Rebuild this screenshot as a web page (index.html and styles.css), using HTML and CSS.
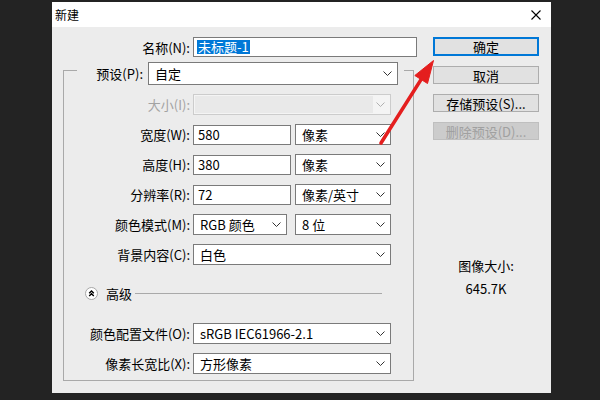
FILE: index.html
```html
<!DOCTYPE html>
<html lang="zh-CN">
<head>
<meta charset="utf-8">
<title>新建</title>
<link rel="stylesheet" href="styles.css">
</head>
<body>
<div class="dialog">
  <div class="titlebar">
    <span class="title">新建</span>
    <svg class="close" width="10" height="10" viewBox="0 0 10 10"><path d="M0.5 0.5 L9.5 9.5 M9.5 0.5 L0.5 9.5" stroke="#000" stroke-width="1.1" fill="none"/></svg>
  </div>
  <div class="content">
    <div class="left">
      <div class="name-row">
        <span class="lbl name-lbl">名称(N):</span>
        <div class="input name-input"><span class="sel-text">未标题-1</span></div>
      </div>
      <div class="group">
        <div class="preset-row">
          <span class="lbl preset-lbl">预设(P):</span>
          <div class="select preset-select"><span>自定</span><svg class="chev" width="9" height="5" viewBox="0 0 9 5"><path d="M0.5 0.5 L4.5 4.5 L8.5 0.5" stroke="#333" fill="none"/></svg></div>
        </div>
        <div class="row">
          <span class="lbl disabled-text">大小(I):</span>
          <div class="select select-disabled w-full"><span class="dis-fill"></span><svg class="chev" width="9" height="5" viewBox="0 0 9 5"><path d="M0.5 0.5 L4.5 4.5 L8.5 0.5" stroke="#b0b0b0" fill="none"/></svg></div>
        </div>
        <div class="row">
          <span class="lbl">宽度(W):</span>
          <div class="pair">
            <div class="input w-num">580</div>
            <div class="select w-unit"><span>像素</span><svg class="chev" width="9" height="5" viewBox="0 0 9 5"><path d="M0.5 0.5 L4.5 4.5 L8.5 0.5" stroke="#333" fill="none"/></svg></div>
          </div>
        </div>
        <div class="row">
          <span class="lbl">高度(H):</span>
          <div class="pair">
            <div class="input w-num">380</div>
            <div class="select w-unit"><span>像素</span><svg class="chev" width="9" height="5" viewBox="0 0 9 5"><path d="M0.5 0.5 L4.5 4.5 L8.5 0.5" stroke="#333" fill="none"/></svg></div>
          </div>
        </div>
        <div class="row">
          <span class="lbl">分辨率(R):</span>
          <div class="pair">
            <div class="input w-num">72</div>
            <div class="select w-unit"><span>像素/英寸</span><svg class="chev" width="9" height="5" viewBox="0 0 9 5"><path d="M0.5 0.5 L4.5 4.5 L8.5 0.5" stroke="#333" fill="none"/></svg></div>
          </div>
        </div>
        <div class="row">
          <span class="lbl">颜色模式(M):</span>
          <div class="pair">
            <div class="select w-mode"><span>RGB 颜色</span><svg class="chev" width="9" height="5" viewBox="0 0 9 5"><path d="M0.5 0.5 L4.5 4.5 L8.5 0.5" stroke="#333" fill="none"/></svg></div>
            <div class="select w-unit"><span>8 位</span><svg class="chev" width="9" height="5" viewBox="0 0 9 5"><path d="M0.5 0.5 L4.5 4.5 L8.5 0.5" stroke="#333" fill="none"/></svg></div>
          </div>
        </div>
        <div class="row">
          <span class="lbl">背景内容(C):</span>
          <div class="select w-full"><span>白色</span><svg class="chev" width="9" height="5" viewBox="0 0 9 5"><path d="M0.5 0.5 L4.5 4.5 L8.5 0.5" stroke="#333" fill="none"/></svg></div>
        </div>
        <div class="adv-row">
          <svg class="adv-icon" width="13" height="13" viewBox="0 0 13 13"><circle cx="6.5" cy="6.5" r="6" fill="#fff" stroke="#a6a6a6"/><path d="M4.2 6.3 L6.5 4 L8.8 6.3 M4.2 9 L6.5 6.7 L8.8 9" stroke="#000" stroke-width="1.4" fill="none"/></svg>
          <span class="adv-text">高级</span>
          <span class="adv-line"></span>
        </div>
        <div class="row first-adv">
          <span class="lbl">颜色配置文件(O):</span>
          <div class="select w-full"><span>sRGB IEC61966-2.1</span><svg class="chev" width="9" height="5" viewBox="0 0 9 5"><path d="M0.5 0.5 L4.5 4.5 L8.5 0.5" stroke="#333" fill="none"/></svg></div>
        </div>
        <div class="row">
          <span class="lbl">像素长宽比(X):</span>
          <div class="select w-full"><span>方形像素</span><svg class="chev" width="9" height="5" viewBox="0 0 9 5"><path d="M0.5 0.5 L4.5 4.5 L8.5 0.5" stroke="#333" fill="none"/></svg></div>
        </div>
      </div>
    </div>
    <div class="right">
      <div class="btn btn-ok">确定</div>
      <div class="btn">取消</div>
      <div class="btn">存储预设(S)...</div>
      <div class="btn btn-disabled">删除预设(D)...</div>
      <div class="img-size">
        <div class="img-size-label">图像大小:</div>
        <div class="img-size-value">645.7K</div>
      </div>
    </div>
  </div>
</div>
<svg class="arrow" width="600" height="400" viewBox="0 0 600 400">
  <g fill="#e41e1e" stroke="#e41e1e">
    <line x1="381" y1="143" x2="421" y2="79.6" stroke-width="3.6" stroke-linecap="round"/>
    <polygon points="433.5,60.5 427.5,83.5 414.8,75.5" stroke-width="1" stroke-linejoin="round"/>
  </g>
</svg>
</body>
</html>
```
FILE: styles.css
```css
* { box-sizing: border-box; margin: 0; padding: 0; }
html, body { width: 600px; height: 400px; overflow: hidden; }
body {
  background: #232323;
  font-family: "Noto Sans CJK SC", "Microsoft YaHei", sans-serif;
  font-size: 13px;
  color: #000;
  padding: 2px 0 0 52px;
  position: relative;
}
.dialog {
  width: 499px;
  height: 391px;
  background: #ececec;
  display: flex;
  flex-direction: column;
}
.titlebar {
  height: 25px;
  background: #fff;
  display: flex;
  align-items: center;
  justify-content: space-between;
  padding: 0 10px 0 3px;
  font-size: 12px;
}
.title { line-height: 1; }
.close { display: block; }
.content { display: flex; padding-top: 10px; }
.left { width: 381px; padding-left: 11px; }
.right { width: 106px; display: flex; flex-direction: column; }

.lbl { text-align: right; white-space: nowrap; line-height: 1; }
.disabled-text { color: #a3a3a3; }

.name-row { display: flex; align-items: center; height: 20px; }
.name-lbl { width: 127px; margin-right: 3px; }
.input {
  height: 20px;
  border: 1px solid #7a7a7a;
  background: #fff;
  display: flex;
  align-items: center;
  padding-left: 4px;
  line-height: 1;
}
.name-input { width: 224px; padding-left: 3px; }
.sel-text { background: #0078d7; color: #fff; line-height: 14px; padding: 0 1px; }

.group {
  margin-top: 13px;
  width: 351px;
  height: 311px;
  border: 1px solid #a9a9a9;
}
.preset-row {
  margin: -9px 0 0 13px;
  width: 327px;
  height: 23px;
  background: #ececec;
  display: flex;
  align-items: center;
  padding-right: 6px;
}
.preset-lbl { width: 66px; margin-right: 5px; }
.select {
  height: 21px;
  border: 1px solid #7a7a7a;
  background: #fff;
  display: flex;
  align-items: center;
  justify-content: space-between;
  padding: 0 5px 0 6px;
  line-height: 1;
  white-space: nowrap;
}
.preset-select { width: 250px; height: 23px; }
.chev { display: block; flex: none; }

.row { display: flex; align-items: center; height: 21px; margin-top: 9px; }
.row .lbl { width: 126px; margin-right: 3px; }
.row.first-adv { margin-top: 0; }
.w-full { width: 198px; }
.pair { width: 198px; display: flex; justify-content: space-between; align-items: center; }
.w-num { width: 98px; }
.w-unit { width: 96px; }
.w-mode { width: 94px; }
.select-disabled {
  border-color: #cccccc;
  background: #f4f4f4;
  padding: 0 5px 0 1px;
}
.dis-fill { display: block; width: 178px; height: 17px; background: #e9e9e9; }

.adv-row {
  display: flex;
  align-items: center;
  height: 21px;
  margin: 18px 0 19px;
  padding-left: 21px;
}
.adv-icon { display: block; flex: none; }
.adv-text { margin-left: 8px; line-height: 1; }
.adv-line { flex: 1; height: 1px; background: #a9a9a9; margin: 0 31px 0 3px; }

.btn {
  height: 18px;
  margin-top: 10px;
  border: 1px solid #adadad;
  background: #e1e1e1;
  display: flex;
  align-items: center;
  justify-content: center;
  line-height: 1;
  white-space: nowrap;
}
.btn-ok { margin-top: 0; height: 19px; border: 2px solid #0078d7; }
.btn-disabled { background: #cccccc; border-color: #bfbfbf; color: #a0a0a0; }

.img-size { margin-top: 117px; text-align: center; }
.img-size-label { line-height: 18px; }
.img-size-value { line-height: 18px; margin-top: 5px; }

.arrow { position: absolute; left: 0; top: 0; pointer-events: none; }
```
